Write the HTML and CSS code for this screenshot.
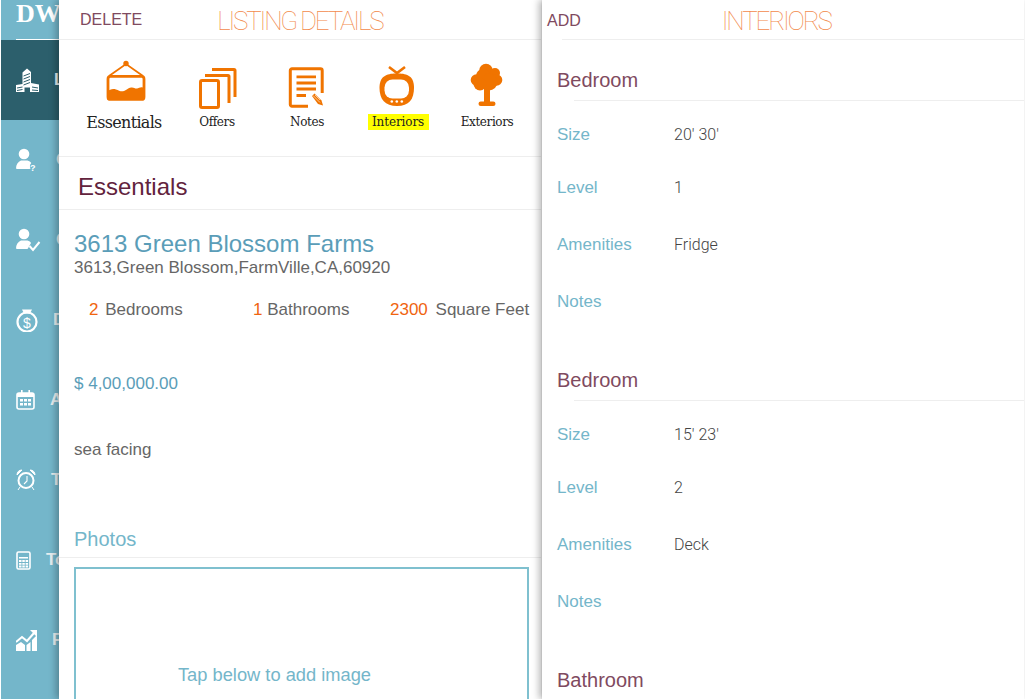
FILE: index.html
```html
<!DOCTYPE html>
<html lang="en">
<head>
    <meta charset="UTF-8">
    <title>Listing Details</title>
    <link rel="stylesheet" href="styles.css">
</head>
<body>
    <div class="app">
        <nav class="sidebar">
            <div class="logo">DW</div>
            <a class="nav-item active">
                <svg width="23" height="24" viewBox="0 0 23 24"><path d="M6.500 4.500L11 .5l4 3.500V15l8 1.500V24H0v-7l6.500-1z" fill="#fff"/><path d="M7.500 8l6.500-2.500M7.500 11l6.500-2.500M7.500 14l6.500-2.500M7.500 17l6.500-2.500M1 20l5.500-1M1 22.500l5.500-1M16 19l6 1M16 22l6 .5" stroke="#2c5f6c" stroke-width="1" fill="none"/><path d="M8.500 19.500H14V24H8.500z" fill="#2c5f6c"/></svg>
                <span>L</span>
            </a>
            <a class="nav-item">
                <svg width="25" height="24" viewBox="0 0 25 24"><circle cx="8" cy="6" r="5.300" fill="#fff"/><path d="M0 20.500c0-4 2-6.500 5-8h6.500c1.800.6 3 1.500 3.800 2.500-1.500 1.300-1.800 3.500-.8 5.500l-1 .5H1z" fill="#fff"/><text x="14" y="22.500" class="nav-mark">?</text></svg>
                <span>C</span>
            </a>
            <a class="nav-item">
                <svg width="25" height="24" viewBox="0 0 25 24"><circle cx="8" cy="6" r="5.300" fill="#fff"/><path d="M0 20.500c0-4 2-6.500 5-8h6.500c1.800.6 3 1.500 3.500 2.500l-2.500 4.500-1 1.500H1z" fill="#fff"/><path d="M13.500 18l3.500 4 6.500-8" stroke="#fff" stroke-width="2" fill="none"/></svg>
                <span>C</span>
            </a>
            <a class="nav-item">
                <svg width="22" height="24" viewBox="0 0 22 24"><circle cx="11" cy="14" r="9.500" fill="none" stroke="#fff" stroke-width="2.200"/><path d="M6 1.500h10l-2 4H8z" fill="#fff"/><text x="11" y="19.500" class="nav-dollar">$</text></svg>
                <span>D</span>
            </a>
            <a class="nav-item">
                <svg width="19" height="20" viewBox="0 0 19 20"><rect x="1" y="3" width="17" height="16" rx="2" fill="none" stroke="#fff" stroke-width="1.600"/><path d="M1 3h17v4H1zM5 0h1.600v4H5zM12.400 0H14v4h-1.600zM4 9h3v2.500H4zM8 9h3v2.500H8zM12 9h3v2.500h-3zM4 13h3v2.500H4zM8 13h3v2.500H8zM12 13h3v2.500h-3z" fill="#fff"/></svg>
                <span>A</span>
            </a>
            <a class="nav-item">
                <svg width="20" height="22" viewBox="0 0 20 22"><circle cx="10" cy="11.500" r="7.500" fill="none" stroke="#fff" stroke-width="2"/><path d="M1 6c0-3 2-5 5-5zM19 6c0-3-2-5-5-5zM4 18l-2 3M16 18l2 3" fill="#fff" stroke="#fff"/><path d="M11 7v5l-3 3" fill="none" stroke="#fff" stroke-width="1.100"/></svg>
                <span>T</span>
            </a>
            <a class="nav-item">
                <svg width="15" height="19" viewBox="0 0 15 19"><rect x="1" y="1" width="13" height="17" rx="1.500" fill="none" stroke="#fff" stroke-width="1.600"/><path d="M3 6h9v1.500H3zM3 9h2.500v2H3zM6.300 9h2.500v2H6.300zM9.600 9h2.500v2H9.600zM3 12h2.500v1.800H3zM6.300 12h2.500v1.800H6.300zM9.600 12h2.500v1.800H9.600zM3 14.600h2.500v1.800H3zM6.300 14.600h2.500v1.800H6.300zM9.600 14.600h2.500v1.800H9.600z" fill="#fff"/></svg>
                <span>To</span>
            </a>
            <a class="nav-item">
                <svg width="21" height="22" viewBox="0 0 21 22"><path d="M0 22v-6l5-3 4 3v6zM10.500 22v-6l4-3v9zM16 22V11l5-5v16z" fill="#fff"/><path d="M0 13l6-5 5 4 7-8" fill="none" stroke="#fff" stroke-width="2"/><path d="M14 1h7v7z" fill="#fff"/></svg>
                <span>F</span>
            </a>
        </nav>

        <main class="details">
            <header class="topbar">
                <a class="topbar-action">DELETE</a>
                <h1 class="topbar-title details-title">LISTING DETAILS</h1>
            </header>

            <div class="tabs">
                <div class="tab tab-main">
                    <svg width="44" height="50" viewBox="0 0 44 50">
                        <path d="M7 16L24 4l17 12" fill="none" stroke="#f07400" stroke-width="1.800"/>
                        <circle cx="24" cy="3.500" r="2.700" fill="#f07400"/>
                        <rect x="6" y="16.400" width="36" height="23" rx="2.500" fill="#fff" stroke="#f07400" stroke-width="2.800"/>
                        <path d="M5 32c3-3 6-3.500 9-2.500s5 2.500 8 1.500 4-3 7-3.500 4 1.500 6 1 5-2.500 7 0v11H5z" fill="#f07400"/>
                    </svg>
                    <div class="tab-label">Essentials</div>
                </div>
                <div class="tab">
                    <svg width="44" height="50" viewBox="0 0 44 50">
                        <rect x="5.500" y="20.500" width="18" height="27" rx="1.500" fill="none" stroke="#f07400" stroke-width="3"/>
                        <path d="M10 15.500h23a1 1 0 0 1 1 1V43" fill="none" stroke="#f07400" stroke-width="3"/>
                        <path d="M17 9.500h22a1 1 0 0 1 1 1V37" fill="none" stroke="#f07400" stroke-width="3"/>
                    </svg>
                    <div class="tab-label">Offers</div>
                </div>
                <div class="tab">
                    <svg width="44" height="50" viewBox="0 0 44 50">
                        <path d="M23 46.300H7a1.700 1.700 0 0 1-1.700-1.700V10.500a1.700 1.700 0 0 1 1.700-1.700h28.500a1.700 1.700 0 0 1 1.700 1.700V33" fill="none" stroke="#f07400" stroke-width="3"/>
                        <path d="M11.500 15.500H31v2.800H11.500zM11.500 21.600H31v2.800H11.500zM11.500 27.600H31v2.800H11.500zM11.500 34.100H21v2.800h-9.500z" fill="#f07400"/>
                        <path d="M27 36l2.500-2.500 7 7 1.500 5-5-1.500z" fill="#f07400"/>
                        <path d="M28 35.500l7 7M30 35l5 5" stroke="#fff" stroke-width=".6"/>
                    </svg>
                    <div class="tab-label">Notes</div>
                </div>
                <div class="tab">
                    <svg width="44" height="50" viewBox="0 0 44 50">
                        <path d="M14 7l8 6 8-6" fill="none" stroke="#f07400" stroke-width="2.600"/>
                        <path d="M22 13.500c8 0 17 1 17 14 0 12-5 18.500-17 18.500S4.500 39.500 4.500 27.500c0-13 9.500-14 17.500-14z" fill="#f07400"/>
                        <rect x="9.500" y="19.500" width="24.500" height="19" rx="8" fill="#fff"/>
                        <circle cx="16.800" cy="41.500" r="1.300" fill="#fff"/>
                        <circle cx="21.800" cy="41.500" r="1.300" fill="#fff"/>
                        <circle cx="26.800" cy="41.500" r="1.300" fill="#fff"/>
                    </svg>
                    <div class="tab-label tab-label-marked">Interiors</div>
                </div>
                <div class="tab">
                    <svg width="44" height="50" viewBox="0 0 44 50">
                        <circle cx="21" cy="10.500" r="6.800" fill="#f07400"/>
                        <circle cx="30" cy="13" r="5" fill="#f07400"/>
                        <circle cx="31.500" cy="20" r="5.800" fill="#f07400"/>
                        <circle cx="11.500" cy="20" r="5.800" fill="#f07400"/>
                        <circle cx="18" cy="16" r="7" fill="#f07400"/>
                        <circle cx="24" cy="22" r="8.500" fill="#f07400"/>
                        <circle cx="15" cy="24" r="6.500" fill="#f07400"/>
                        <path d="M19 26h6v16h-6z" fill="#f07400"/>
                        <rect x="13.500" y="41.500" width="17" height="4.500" rx="2.200" fill="#f07400"/>
                    </svg>
                    <div class="tab-label">Exteriors</div>
                </div>
            </div>

            <h2 class="section-title">Essentials</h2>

            <section class="listing">
                <div class="listing-name">3613 Green Blossom Farms</div>
                <div class="listing-address">3613,Green Blossom,FarmVille,CA,60920</div>
                <div class="stats">
                    <div class="stat stat-beds"><b>2</b> Bedrooms</div>
                    <div class="stat stat-baths"><b>1</b> Bathrooms</div>
                    <div class="stat"><b>2300</b> Square Feet</div>
                </div>
                <div class="listing-price">$ 4,00,000.00</div>
                <div class="listing-note">sea facing</div>
            </section>

            <h3 class="photos-title">Photos</h3>
            <div class="photo-box">Tap below to add image</div>
        </main>

        <aside class="interiors">
            <header class="topbar topbar-short">
                <a class="topbar-action">ADD</a>
                <h1 class="topbar-title interiors-title">INTERIORS</h1>
            </header>

            <section class="room">
                <h3 class="room-title">Bedroom</h3>
                <div class="fields">
                    <div class="field-name">Size</div><div class="field-value">20' 30'</div>
                    <div class="field-name">Level</div><div class="field-value">1</div>
                    <div class="field-name">Amenities</div><div class="field-value">Fridge</div>
                    <div class="field-name">Notes</div><div class="field-value"></div>
                </div>
            </section>
            <section class="room">
                <h3 class="room-title">Bedroom</h3>
                <div class="fields">
                    <div class="field-name">Size</div><div class="field-value">15' 23'</div>
                    <div class="field-name">Level</div><div class="field-value">2</div>
                    <div class="field-name">Amenities</div><div class="field-value">Deck</div>
                    <div class="field-name">Notes</div><div class="field-value"></div>
                </div>
            </section>
            <section class="room">
                <h3 class="room-title">Bathroom</h3>
            </section>
        </aside>
    </div>
</body>
</html>
```

FILE: styles.css
```css
html, body {
    margin: 0;
    height: 100%;
    overflow: hidden;
    background: #fff;
}

.app {
    display: flex;
    height: 699px;
    padding-left: 1px;
    overflow: hidden;
    font-family: "Liberation Sans", Arial, sans-serif;
}

/* sidebar, mostly covered by the details panel */
.sidebar {
    flex: 0 0 58px;
    width: 58px;
    overflow: hidden;
    background: #74b6ca;
    color: #e6eef0;
}

.logo {
    height: 39px;
    margin-left: 15px;
    border-bottom: 1px solid #fff;
    font-family: "Liberation Serif", serif;
    font-size: 26px;
    font-weight: bold;
    line-height: 28px;
    color: #fff;
    white-space: nowrap;
}

.nav-item {
    display: flex;
    align-items: center;
    gap: 15px;
    height: 80px;
    padding-left: 15px;
    font-size: 17px;
    font-weight: bold;
}

.nav-item.active {
    background: #2c5f6c;
}

.nav-item svg {
    flex: none;
}

.nav-mark {
    font: bold 9px "Liberation Sans", sans-serif;
    fill: #fff;
}

.nav-dollar {
    font: 14px "Liberation Sans", sans-serif;
    fill: #fff;
    text-anchor: middle;
}

/* panels */
.details, .interiors {
    position: relative;
    flex: 0 0 482px;
    width: 482px;
    background: #fff;
    overflow: hidden;
    box-shadow: -3px 0 7px rgba(0, 0, 0, 0.28);
    box-sizing: border-box;
}

.interiors {
    margin-left: 1px;
    z-index: 1;
}

.topbar {
    display: flex;
    align-items: center;
    height: 39px;
    padding-left: 21px;
    border-bottom: 1px solid #eee;
}

.topbar-short {
    height: 40px;
    padding-left: 5px;
    border-bottom: 0;
    position: relative;
}

.topbar-short::after {
    content: "";
    position: absolute;
    left: 20px;
    right: 0;
    bottom: 0;
    border-bottom: 1px solid #eee;
}

.topbar-action {
    padding-top: 1px;
    font-size: 16px;
    color: #7f4a60;
}

.topbar-title {
    margin: 0;
    padding-top: 2px;
    font-family: Roboto, sans-serif;
    font-size: 26px;
    font-weight: 100;
    color: #f28a4c;
    letter-spacing: -2.2px;
}

.details-title {
    margin-left: 75px;
}

.interiors-title {
    margin-left: 141px;
}

.tabs {
    display: flex;
    height: 116px;
    padding-left: 17px;
    border-bottom: 1px solid #eee;
}

.tab {
    flex: 0 0 90px;
    display: flex;
    flex-direction: column;
    align-items: center;
    padding-top: 20px;
}

.tab-main {
    flex-basis: 96px;
}

.tab-label {
    margin-top: 4px;
    padding: 0 2px;
    font-family: "DejaVu Serif", serif;
    font-size: 12px;
    line-height: 16px;
    letter-spacing: -0.4px;
    color: #222;
}

.tab-main .tab-label {
    font-size: 16px;
    letter-spacing: -0.7px;
    margin-top: 5px;
}

.tab-label-marked {
    margin-left: 2px;
    background: #ffff00;
    width: 61px;
    box-sizing: border-box;
    text-align: center;
    letter-spacing: -0.1px;
}

.section-title {
    margin: 0;
    height: 53px;
    padding: 15px 0 0 19px;
    box-sizing: border-box;
    border-bottom: 1px solid #eee;
    font-size: 24px;
    font-weight: normal;
    line-height: 30px;
    color: #62233d;
}

.listing {
    padding: 20px 0 0 15px;
    height: 311px;
    box-sizing: border-box;
}

.listing-name {
    font-size: 24px;
    line-height: 28px;
    color: #5a9db8;
}

.listing-address {
    font-size: 17px;
    line-height: 20px;
    color: #666;
}

.stats {
    display: flex;
    margin-top: 21px;
    padding-left: 15px;
    height: 22px;
    font-size: 17px;
    line-height: 22px;
    color: #666;
}

.stat b {
    font-weight: normal;
    color: #f0640f;
    margin-right: 3px;
}

.stat-beds {
    flex: 0 0 164px;
}

.stat-beds b {
    margin-right: 2px;
}

.stat-baths {
    flex: 0 0 137px;
}

.stat-baths b {
    margin-right: 0;
}

.listing-price {
    margin-top: 52px;
    font-size: 17px;
    line-height: 22px;
    color: #5a9db8;
}

.listing-note {
    margin-top: 44px;
    font-size: 17px;
    line-height: 22px;
    color: #666;
}

.photos-title {
    margin: 0;
    height: 29px;
    padding: 7px 0 0 15px;
    border-bottom: 1px solid #eee;
    font-size: 20px;
    font-weight: normal;
    line-height: 22px;
    color: #74b6ca;
}

.photo-box {
    height: 200px;
    margin: 9px 0 0 15px;
    width: 455px;
    padding: 95px 54px 0 0;
    box-sizing: border-box;
    border: 2px solid #7fc0cf;
    text-align: center;
    font-size: 18.3px;
    color: #74b6ca;
}

/* interiors list */
.room-title {
    margin: 0 0 0 15px;
    padding-top: 28px;
    height: 60px;
    box-sizing: border-box;
    font-size: 20px;
    font-weight: normal;
    line-height: 24px;
    color: #7f4a60;
    position: relative;
}

.room-title::after {
    content: "";
    position: absolute;
    left: 17px;
    right: 0;
    bottom: -1px;
    border-bottom: 1px solid #eee;
}

.room {
    height: 300px;
}

.fields {
    display: grid;
    grid-template-columns: 117px 1fr;
    grid-template-rows: 67px 40px 74px 40px;
    align-items: center;
    margin-left: 15px;
    padding-top: 1px;
    font-size: 17px;
}

.field-name {
    color: #74b6ca;
}

.field-value {
    padding-bottom: 1px;
    font-family: Roboto, sans-serif;
    font-size: 16px;
    font-weight: 300;
    color: #444;
}
```
